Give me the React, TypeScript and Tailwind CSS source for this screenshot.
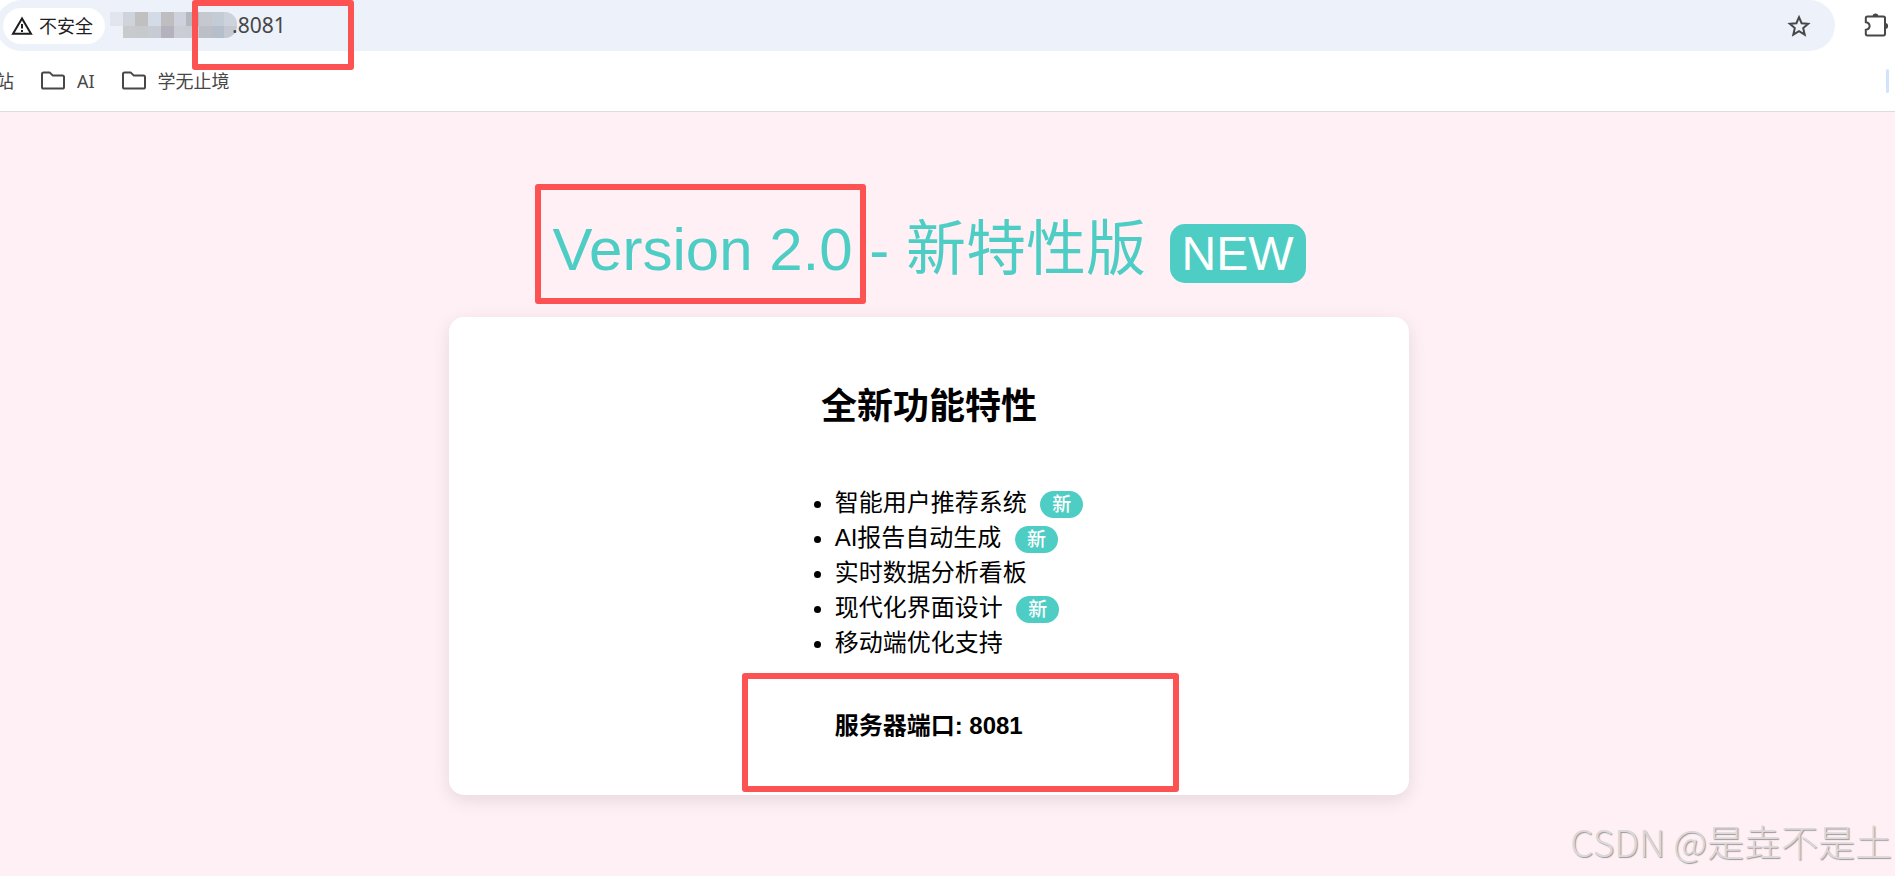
import { useState } from "react";

const features = [
  { label: "智能用户推荐系统", isNew: true },
  { label: "AI报告自动生成", isNew: true },
  { label: "实时数据分析看板", isNew: false },
  { label: "现代化界面设计", isNew: true },
  { label: "移动端优化支持", isNew: false },
];

const hostBlocks = [
  ["#e1e5ee", "#ecf1fa"],
  ["#cfd4dc", "#c9cacd"],
  ["#c0c0c1", "#c8c9cc"],
  ["#d3dbe6", "#c6cbd4"],
  ["#bfbdbf", "#b3b2bd"],
  ["#cdd2dc", "#cacdd3"],
  ["#b6b8bf", "#c8ccd4"],
  ["#c5c9cf", "#bcc0c6"],
  ["#c2cbd6", "#b7becb"],
  ["#cdd2dc", "#c3c8d1"],
];

function FolderIcon() {
  return (
    <svg className="h-5 w-6 shrink-0" viewBox="0 0 24 20" fill="none" stroke="#474747" strokeWidth="2" strokeLinejoin="round">
      <path d="M1 3Q1 1.4 2.6 1.4H8.6L11.6 4.4H21.4Q23 4.4 23 6V16Q23 17.6 21.4 17.6H2.6Q1 17.6 1 16Z" />
    </svg>
  );
}

function AddressBar() {
  const [url, setUrl] = useState(".8081");

  return (
    <div className="flex items-center">
      <div className="-ml-1 mr-7 flex h-[51px] grow items-center rounded-full bg-[#ecf1fa] pl-[7px] pr-6">
        <button className="flex h-9 shrink-0 items-center gap-1.5 rounded-full bg-white pl-2 pr-3 text-[18px] leading-6 text-[#1f1f1f]">
          <svg className="h-[22px] w-[22px]" viewBox="0 0 22 22" fill="none" stroke="#1f1f1f" strokeWidth="2">
            <path d="M11 3.4L20 18.8H2Z" />
            <path d="M11 9V13.6M11 15V17" />
          </svg>
          不安全
        </button>
        <div className="mb-[2px] ml-[5px] flex h-[26px] w-[127px] shrink-0 overflow-hidden rounded-r-xl">
          {hostBlocks.map(([top, bottom], i) => (
            <div key={i} className="flex grow flex-col">
              <div className="h-[14px]" style={{ backgroundColor: top }} />
              <div className="h-3" style={{ backgroundColor: bottom }} />
            </div>
          ))}
        </div>
        <input
          aria-label="地址栏"
          className="-ml-[5px] mb-[2px] min-w-0 grow bg-transparent text-[21px] leading-7 text-[#474747] outline-none"
          value={url}
          onChange={(e) => setUrl(e.target.value)}
        />
        <button aria-label="收藏">
          <svg className="h-6 w-6" viewBox="0 0 24 24" fill="none" stroke="#474747" strokeWidth="2">
            <path d="M12 3.2L14.6 9.2L21.2 9.8L16.2 14.1L17.7 20.6L12 17.1L6.3 20.6L7.8 14.1L2.8 9.8L9.4 9.2Z" />
          </svg>
        </button>
      </div>
      <button aria-label="扩展程序" className="mb-[2px] mr-[6px]">
        <svg className="h-[26px] w-[26px]" viewBox="0 0 26 26" fill="none" stroke="#474747" strokeWidth="2">
          <path d="M4.4 4.6H20.4Q22 4.6 22 6.2V21.8Q22 23.4 20.4 23.4H4.4Q2.8 23.4 2.8 21.8V17.8Q6.6 17.2 6.6 14Q6.6 10.8 2.8 10.2V6.2Q2.8 4.6 4.4 4.6Z" />
          <path d="M9.6 4.4A2.9 2.9 0 0 1 15.4 4.4ZM22.2 11A2.9 2.9 0 0 1 22.2 16.8Z" fill="#474747" stroke="none" />
        </svg>
      </button>
    </div>
  );
}

function BookmarkBar() {
  return (
    <div className="flex h-[61px] items-center border-b border-[#dadce0] text-[18px] leading-6 text-[#474747]">
      <a href="#site" className="-ml-1">站</a>
      <a href="#ai" className="ml-[27px] flex items-center gap-3">
        <FolderIcon />
        AI
      </a>
      <a href="#study" className="ml-[27px] flex items-center gap-3">
        <FolderIcon />
        学无止境
      </a>
      <div className="ml-auto mr-[6px] h-6 w-[3px] rounded-sm bg-[#d3e3fd]" />
    </div>
  );
}

function Badge({ children, className }: { children: string; className: string }) {
  return <span className={`ml-[7px] rounded-[15px] bg-[#4ecdc4] px-3 py-[3px] leading-none text-white ${className}`}>{children}</span>;
}

export default function App() {
  return (
    <div className="relative flex min-h-screen flex-col overflow-hidden bg-[#fff0f5]">
      <header className="bg-white font-['Noto_Sans','Noto_Sans_CJK_SC',sans-serif]">
        <AddressBar />
        <BookmarkBar />
      </header>

      <main className="flex flex-col items-center pr-[37px] pt-[102px] font-['Liberation_Sans','Noto_Sans_CJK_SC',sans-serif] text-2xl text-black">
        <h1 className="text-[60px] leading-[72px] text-[#4ecdc4]">
          Version 2.0 - 新特性版 <Badge className="text-[48px]">NEW</Badge>
        </h1>

        <section className="mt-[31px] flex w-full max-w-[960px] flex-col items-center rounded-[15px] bg-white pb-[52px] pt-[66px] shadow-[0_5px_18px_rgba(0,0,0,0.1)]">
          <h2 className="text-4xl font-bold leading-[48px]">全新功能特性</h2>
          <div className="mt-[54px] pl-[60px]">
            <ul className="list-disc leading-[35px]">
              {features.map((f) => (
                <li key={f.label}>
                  {f.label} {f.isNew && <Badge className="text-[19px] font-medium">新</Badge>}
                </li>
              ))}
            </ul>
            <p className="mt-[48px] font-bold leading-[35px]">服务器端口: 8081</p>
          </div>
        </section>
      </main>

      {/* highlight frames */}
      <div className="absolute left-[192px] top-0 h-[70px] w-[162px] rounded-[3px] border-[6px] border-[#fc5252]" />
      <div className="absolute left-[535px] top-[184px] h-[120px] w-[331px] rounded-[3px] border-[6px] border-[#fc5252]" />
      <div className="absolute left-[742px] top-[673px] h-[119px] w-[437px] rounded-[3px] border-[6px] border-[#fc5252]" />

      <p className="absolute bottom-2 right-[3px] font-['Noto_Sans_CJK_SC',sans-serif] text-[37px] font-light leading-[54px] text-[#dcd8da] [text-shadow:1px_1px_1px_#999]">
        CSDN @是垚不是土
      </p>
    </div>
  );
}
